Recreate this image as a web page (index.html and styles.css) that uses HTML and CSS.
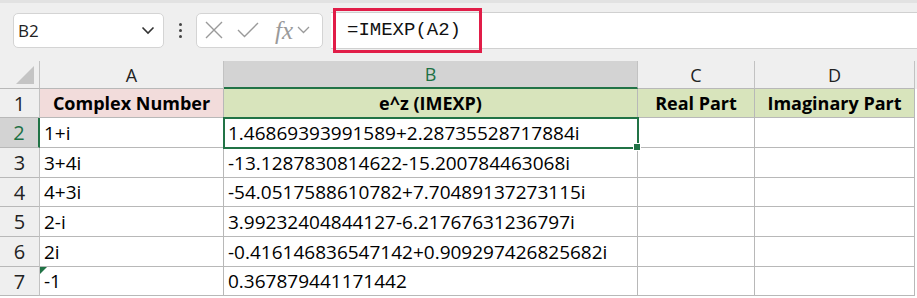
FILE: index.html
```html
<!DOCTYPE html>
<html lang="en">

<head>
    <meta charset="UTF-8">
    <title>IMEXP</title>
    <link rel="stylesheet" href="styles.css">
</head>

<body>
    <div class="toolbar">
        <div class="namebox">
            <span class="cellref">B2</span>
            <svg class="chev" width="14" height="9" viewBox="0 0 14 9"><path d="M1.5 1.5 L7 7 L12.5 1.5" fill="none" stroke="#333" stroke-width="1.6"/></svg>
        </div>
        <div class="dots"><span></span><span></span><span></span></div>
        <div class="fxbox">
            <svg width="20" height="20" viewBox="0 0 20 20"><path d="M2 2 L18 18 M18 2 L2 18" stroke="#9a9a9a" stroke-width="1.4"/></svg>
            <svg width="22" height="18" viewBox="0 0 22 18"><path d="M1 9 L7.5 15.5 L21 2" fill="none" stroke="#9a9a9a" stroke-width="1.4"/></svg>
            <span class="fx">fx</span>
            <svg width="13" height="8" viewBox="0 0 13 8"><path d="M1 1 L6.5 6.5 L12 1" fill="none" stroke="#9a9a9a" stroke-width="1.3"/></svg>
        </div>
        <div class="formula">
            <span class="highlight">=IMEXP(A2)</span>
        </div>
    </div>

    <div class="sheet">
        <div class="corner"><span class="tri"></span></div>
        <div class="colhead">A</div>
        <div class="colhead active">B</div>
        <div class="colhead">C</div>
        <div class="colhead">D</div>
        <div class="edge head"></div>

        <div class="rowhead">1</div>
        <div class="cell title pink">Complex Number</div>
        <div class="cell title green">e^z (IMEXP)</div>
        <div class="cell title green">Real Part</div>
        <div class="cell title green">Imaginary Part</div>
        <div class="edge"></div>

        <div class="rowhead active">2</div>
        <div class="cell">1+i</div>
        <div class="cell selected">1.46869393991589+2.28735528717884i</div>
        <div class="cell"></div>
        <div class="cell"></div>
        <div class="edge"></div>

        <div class="rowhead">3</div>
        <div class="cell">3+4i</div>
        <div class="cell">-13.1287830814622-15.200784463068i</div>
        <div class="cell"></div>
        <div class="cell"></div>
        <div class="edge"></div>

        <div class="rowhead">4</div>
        <div class="cell">4+3i</div>
        <div class="cell">-54.0517588610782+7.70489137273115i</div>
        <div class="cell"></div>
        <div class="cell"></div>
        <div class="edge"></div>

        <div class="rowhead">5</div>
        <div class="cell">2-i</div>
        <div class="cell">3.99232404844127-6.21767631236797i</div>
        <div class="cell"></div>
        <div class="cell"></div>
        <div class="edge"></div>

        <div class="rowhead">6</div>
        <div class="cell">2i</div>
        <div class="cell">-0.416146836547142+0.909297426825682i</div>
        <div class="cell"></div>
        <div class="cell"></div>
        <div class="edge"></div>

        <div class="rowhead">7</div>
        <div class="cell flagged">-1</div>
        <div class="cell">0.367879441171442</div>
        <div class="cell"></div>
        <div class="cell"></div>
        <div class="edge"></div>
    </div>
</body>

</html>
```

FILE: styles.css
```css
body {
    margin: 0;
    width: 917px;
    height: 298px;
    overflow: hidden;
    background-color: #ffffff;
    font-family: 'Open Sans', sans-serif;
    color: #000000;
}

/* formula bar area */
.toolbar {
    height: 61px;
    box-sizing: border-box;
    background-color: #efefef;
    border-top: 3px solid #e2e2e2;
    display: flex;
    align-items: center;
    padding-left: 13px;
    padding-bottom: 4px;
}

.namebox {
    width: 151px;
    height: 35px;
    box-sizing: border-box;
    background-color: #ffffff;
    border: 1px solid #d4d4d4;
    border-radius: 5px;
    display: flex;
    align-items: center;
    justify-content: space-between;
    padding: 0 8px 0 4px;
}

.cellref {
    font-size: 17px;
    color: #222222;
}

.dots {
    width: 32px;
    display: flex;
    flex-direction: column;
    align-items: center;
    gap: 3px;
}

.dots span {
    width: 3px;
    height: 3px;
    border-radius: 50%;
    background-color: #444444;
}

.fxbox {
    width: 127px;
    height: 35px;
    box-sizing: border-box;
    background-color: #ffffff;
    border: 1px solid #d4d4d4;
    border-radius: 5px;
    display: flex;
    align-items: center;
    gap: 13px;
    padding-left: 7px;
}

.fx {
    font-family: 'Liberation Serif', serif;
    font-style: italic;
    font-size: 25px;
    line-height: 1;
    color: #9a9a9a;
    margin-left: 3px;
    margin-right: -9px;
}

.formula {
    flex: 1;
    height: 37px;
    box-sizing: border-box;
    margin-left: 8px;
    background-color: #ffffff;
    border-top: 1px solid #d0d0d0;
    border-bottom: 1px solid #d0d0d0;
    display: flex;
    align-items: center;
}

.highlight {
    box-sizing: border-box;
    height: 45px;
    width: 149px;
    margin-left: 2px;
    border: 3px solid #e11d48;
    font-family: 'Liberation Mono', monospace;
    font-size: 19px;
    color: #111111;
    display: flex;
    align-items: center;
    padding-left: 11px;
}

/* grid */
.sheet {
    display: grid;
    grid-template-columns: 40px 184px 414px 117px 160px 2px;
    grid-template-rows: 28px 29px 30px 30px 29px 30px 30px 29px;
    font-size: 19px;
}

.corner,
.colhead,
.rowhead {
    background-color: #efefef;
    border-right: 1px solid #c2c2c2;
    border-bottom: 1px solid #b8b8b8;
    color: #222222;
    display: flex;
    align-items: center;
    justify-content: center;
    box-sizing: border-box;
}

.colhead {
    font-size: 18px;
}

.rowhead {
    font-size: 20px;
}

.corner {
    position: relative;
}

.tri {
    position: absolute;
    right: 5px;
    bottom: 4px;
    width: 0;
    height: 0;
    border-left: 18px solid transparent;
    border-bottom: 18px solid #c4c4c4;
}

.colhead.active {
    background-color: #d3d3d3;
    color: #1e7145;
    border-bottom: 2px solid #217346;
}

.rowhead.active {
    background-color: #d3d3d3;
    color: #1e7145;
    border-right: 2px solid #217346;
}

.edge {
    background-color: #ffffff;
}

.edge.head {
    background-color: #efefef;
}

.cell {
    border-right: 1px solid #b8b8b8;
    border-bottom: 1px solid #b8b8b8;
    box-sizing: border-box;
    display: flex;
    align-items: center;
    padding-left: 4px;
    white-space: nowrap;
    overflow: visible;
}

.cell.title {
    font-weight: bold;
    justify-content: center;
    padding-left: 0;
    font-size: 18px;
}

.pink {
    background-color: #f2dcdb;
}

.green {
    background-color: #d8e4bc;
}

.selected {
    position: relative;
    outline: 2px solid #217346;
    outline-offset: -1px;
}

.selected::after {
    content: "";
    position: absolute;
    right: -4px;
    bottom: -4px;
    width: 6px;
    height: 6px;
    background-color: #217346;
    border: 1px solid #ffffff;
}

.flagged {
    position: relative;
}

.flagged::before {
    content: "";
    position: absolute;
    left: 0;
    top: 0;
    border-top: 7px solid #217346;
    border-right: 7px solid transparent;
}
```
